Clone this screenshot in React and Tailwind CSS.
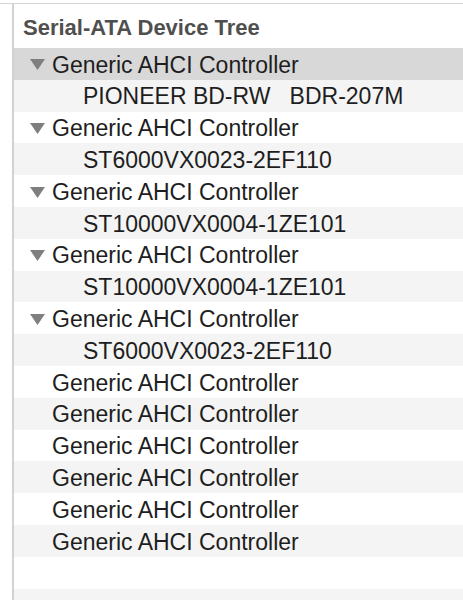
import { Fragment } from 'react';

const controllers = [
  { name: 'Generic AHCI Controller', child: 'PIONEER BD-RW   BDR-207M' },
  { name: 'Generic AHCI Controller', child: 'ST6000VX0023-2EF110' },
  { name: 'Generic AHCI Controller', child: 'ST10000VX0004-1ZE101' },
  { name: 'Generic AHCI Controller', child: 'ST10000VX0004-1ZE101' },
  { name: 'Generic AHCI Controller', child: 'ST6000VX0023-2EF110' },
  { name: 'Generic AHCI Controller' },
  { name: 'Generic AHCI Controller' },
  { name: 'Generic AHCI Controller' },
  { name: 'Generic AHCI Controller' },
  { name: 'Generic AHCI Controller' },
  { name: 'Generic AHCI Controller' },
];

function Disclosure() {
  return (
    <svg width="15" height="11" viewBox="0 0 15 11" className="shrink-0">
      <polygon points="0,0 15,0 7.5,11" fill="#7f7f7f" />
    </svg>
  );
}

export default function App() {
  // flatten the tree into visible rows
  const rows = [];
  controllers.forEach((c) => {
    rows.push({ text: c.name, level: 0, expandable: !!c.child });
    if (c.child) rows.push({ text: c.child, level: 1 });
  });
  rows.push({ text: '', level: 0 });
  rows.push({ text: '', level: 0 });

  return (
    <div
      className="w-[463px] h-[600px] overflow-hidden bg-white pt-[3px]"
      style={{ fontFamily: '"Liberation Sans", Arial, sans-serif' }}
    >
      <div className="border-t border-[#d6d6d6] h-full pl-3">
        <div className="border-l-2 border-[#d2d2d2] h-full">
          <div className="h-[44px] pl-[9px] pt-[13px] text-[22px] font-bold text-[#4f4f4f] leading-none">
            Serial-ATA Device Tree
          </div>
          <div className="flex flex-col">
            {rows.map((r, i) => (
              <div
                key={i}
                className={
                  'h-[31.8px] flex items-center pt-[2px] text-[23px] text-[#1e1e1e] whitespace-pre ' +
                  (i === 0 ? 'bg-[#d8d8d8]' : i % 2 === 1 ? 'bg-[#f4f4f4]' : 'bg-white')
                }
              >
                {r.level === 1 ? (
                  <span className="pl-[69px]">{r.text}</span>
                ) : (
                  <Fragment>
                    <span className="w-[38px] pl-[16px] flex items-center">
                      {r.expandable && <Disclosure />}
                    </span>
                    <span>{r.text}</span>
                  </Fragment>
                )}
              </div>
            ))}
          </div>
        </div>
      </div>
    </div>
  );
}
